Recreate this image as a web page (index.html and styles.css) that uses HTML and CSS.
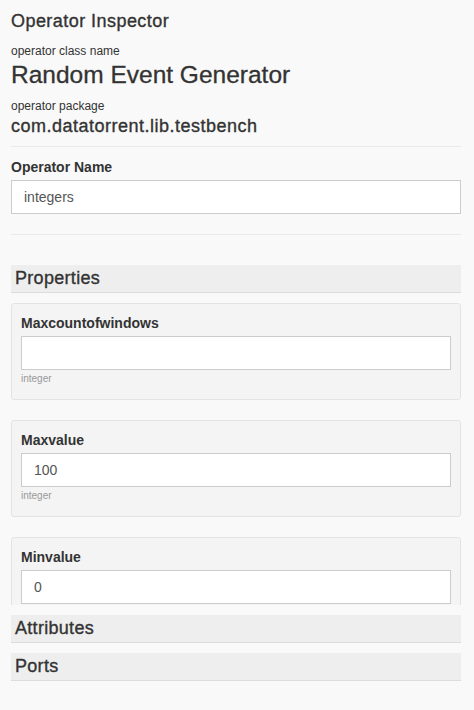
FILE: index.html
```html
<!DOCTYPE html>
<html lang="en">
<head>
<meta charset="utf-8">
<title>Operator Inspector</title>
<link rel="stylesheet" href="styles.css">
</head>
<body>
<div class="inspector">
  <h1 class="title">Operator Inspector</h1>
  <div class="meta-label">operator class name</div>
  <div class="class-name">Random Event Generator</div>
  <div class="meta-label pkg-label">operator package</div>
  <div class="pkg-name">com.datatorrent.lib.testbench</div>
  <hr class="divider first">
  <label class="field-label">Operator Name</label>
  <input class="text-input" type="text" value="integers">
  <hr class="divider second">

  <div class="section-header">Properties</div>
  <div class="props-scroll">
    <div class="prop-panel">
      <label class="field-label">Maxcountofwindows</label>
      <input class="text-input" type="text" value="">
      <div class="help">integer</div>
    </div>
    <div class="prop-panel">
      <label class="field-label">Maxvalue</label>
      <input class="text-input" type="text" value="100">
      <div class="help">integer</div>
    </div>
    <div class="prop-panel">
      <label class="field-label">Minvalue</label>
      <input class="text-input" type="text" value="0">
      <div class="help">integer</div>
    </div>
  </div>
  <div class="section-header gap">Attributes</div>
  <div class="section-header gap">Ports</div>
</div>
</body>
</html>
```
FILE: styles.css
```css
html, body {
  margin: 0;
  padding: 0;
  background: #f9f9f9;
}
body {
  font-family: "Liberation Sans", Arial, sans-serif;
  color: #333;
  height: 710px;
  overflow: hidden;
}
.inspector {
  padding: 11px 13px 0 11px;
  display: flex;
  flex-direction: column;
}
.title {
  margin: 0;
  font-size: 18px;
  line-height: 20px;
  font-weight: normal;
  letter-spacing: 0.45px;
  -webkit-text-stroke: 0.35px #333;
  color: #333;
}
.meta-label {
  margin-top: 14px;
  font-size: 12px;
  line-height: 13px;
  color: #333;
}
.pkg-label {
  margin-top: 12px;
}
.class-name {
  margin-top: 4px;
  font-size: 24.5px;
  line-height: 26px;
  -webkit-text-stroke: 0.3px #333;
  color: #333;
}
.pkg-name {
  margin-top: 3px;
  font-size: 18px;
  line-height: 20px;
  letter-spacing: 0.5px;
  -webkit-text-stroke: 0.35px #333;
  color: #333;
}
.divider {
  margin: 0;
  border: 0;
  border-top: 1px solid #eaeaea;
  height: 0;
}
.divider.first {
  margin-top: 10px;
  margin-bottom: 10px;
}
.divider.second {
  margin-top: 20px;
  margin-bottom: 30px;
}
.field-label {
  display: block;
  font-size: 14px;
  line-height: 20px;
  font-weight: bold;
  color: #333;
  margin-bottom: 3px;
}
.text-input {
  display: block;
  box-sizing: border-box;
  width: 100%;
  height: 34px;
  margin: 0;
  padding: 0 12px;
  border: 1px solid #ccc;
  border-radius: 0;
  background: #fff;
  font-family: "Liberation Sans", Arial, sans-serif;
  font-size: 14px;
  color: #555;
  outline: none;
}
.section-header {
  height: 27px;
  line-height: 27px;
  padding-left: 4px;
  background: #eeeeee;
  border-bottom: 1px solid #dddddd;
  font-size: 18px;
  letter-spacing: 0.3px;
  -webkit-text-stroke: 0.35px #333;
  color: #333;
}
.section-header.gap {
  margin-top: 10px;
}
.props-scroll {
  height: 312px;
  overflow: hidden;
  display: flex;
  flex-direction: column;
  gap: 20px;
  padding-top: 10px;
  box-sizing: border-box;
}
.prop-panel {
  flex: none;
  background: #f4f4f4;
  border: 1px solid #e3e3e3;
  border-radius: 3px;
  padding: 9px 9px 14px 9px;
}
.help {
  margin-top: 3px;
  font-size: 10px;
  line-height: 12px;
  color: #999;
}
```
